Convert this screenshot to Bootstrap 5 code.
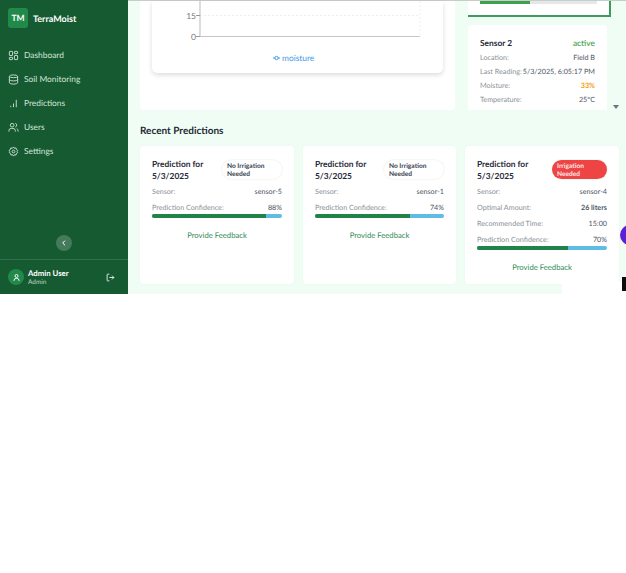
<!DOCTYPE html>
<html lang="en">
<head>
<meta charset="utf-8">
<title>TerraMoist</title>
<link href="https://cdn.jsdelivr.net/npm/bootstrap@5.3.0/dist/css/bootstrap.min.css" rel="stylesheet">
<style>
html,body{margin:0;background:#fff;}
body{font-family:"Lato","Open Sans",sans-serif;color:#1f2937;overflow:hidden;text-rendering:geometricPrecision;}
.app-shell{height:294px;width:626px;position:relative;overflow:hidden;}
.side-bar{width:128px;flex:0 0 128px;background:#165a32;color:#fff;}
.brand-row{height:37px;padding:8px 8px 0;}
.brand-tile{width:20px;height:20px;border-radius:3px;background:#218a4b;font-size:8.5px;font-weight:700;}
.brand-name{font-size:9px;font-weight:700;margin:1px 0 0 5px;line-height:20px;}
.nav-stack{padding-top:6px;}
.nav-entry{height:24px;padding-left:8px;font-size:8.4px;color:#cfe3d6;text-decoration:none;}
.nav-entry svg{width:11px;height:11px;margin-right:5px;flex:none;}
.collapse-zone{height:56px;}
.round-toggle{width:16px;height:16px;border-radius:50%;background:rgba(255,255,255,.2);}
.user-zone{height:35px;border-top:1px solid rgba(255,255,255,.13);padding:0 13px 0 8px;}
.user-disc{width:16px;height:16px;border-radius:50%;background:#218a4b;margin-right:4px;}
.user-title{font-size:7.8px;font-weight:700;line-height:10px;}
.user-role{font-size:6.5px;line-height:9px;color:#b9d4c3;}
.main-area{flex:1;background:#f0fdf4;padding:0 7px 0 12px;border-top:1px solid #c9cdca;min-width:0;}
.upper-row{height:109px;}
.chart-panel{width:315px;background:#fff;border-radius:0 0 4px 4px;padding:0 12px 37px;}
.chart-box{height:72px;background:#fff;border-radius:0 0 5px 5px;box-shadow:0 2px 5px rgba(0,0,0,.14);}
.chart-box svg{display:block;}
.sensor-col{width:141px;margin-left:13px;}
.cut-card{height:16px;margin-right:-2px;background:#fff;border-right:2px solid #3e9a5d;border-bottom:2px solid #3e9a5d;padding:0 12px;}
.meter-cut{height:3px;background:#e5e7eb;}
.meter-cut div{height:3px;background:#3ea150;}
.sensor-box{height:85px;margin-top:8px;background:#fff;border-radius:4px 4px 0 0;padding:12px 12px 0;margin-right:2px;}
.sensor-head{font-size:8.4px;line-height:12px;margin-bottom:2px;font-weight:700;}
.state-on{color:#43a047;}
.kv-row{font-size:7.2px;line-height:14px;white-space:nowrap;}
.kv-key{color:#8b9198;}
.kv-val{color:#4b5563;}
.val-warn{color:#f59e0b;font-weight:700;}
.scroll-tip{width:0;height:0;border-left:3px solid transparent;border-right:3px solid transparent;border-top:4px solid #6b7280;margin:104px 0 0 4px;flex:none;}
.section-title{font-size:10px;font-weight:700;line-height:14px;margin:14px 0 8px;color:#1f2937;}
.pred-grid{display:grid;grid-template-columns:154px 153px 154px;column-gap:9px;}
.pred-box{height:138px;background:#fff;border-radius:4px;padding:12px;box-shadow:0 0 2px rgba(0,0,0,.04);}
.pred-head{height:26px;margin-bottom:1px;flex:none;}
.pred-title{font-size:8.4px;font-weight:700;line-height:12px;width:68px;}
.status-pill{width:60px;height:19px;margin-top:2px;border-radius:10px;font-size:6.6px;line-height:8px;padding:2px 5px;font-weight:700;box-shadow:0 0 2px rgba(0,0,0,.12);}
.pill-calm{background:#fff;color:#374151;}
.pill-alert{background:#ef4444;color:#fde8e8;width:55px;}
.pred-row{font-size:7.2px;line-height:14px;margin-bottom:2px;flex:none;}
.conf-row{margin-bottom:0;line-height:13px;}
.conf-bar{height:4px;border-radius:2px;background:#5fbde4;overflow:hidden;flex:none;}
.conf-fill{height:4px;background:#218347;}
.feedback-link{font-size:7.7px;line-height:12px;color:#2f8a55;text-decoration:none;margin-top:11px;}
.float-dot{position:absolute;left:620px;top:225px;width:20px;height:20px;border-radius:50%;background:#5b21d6;}
.float-sheet{position:absolute;left:562px;top:282px;width:64px;height:12px;background:#fff;}
.float-black{position:absolute;left:622px;top:277px;width:4px;height:14px;background:#0c0c0c;}
</style>
</head>
<body>
<div class="app-shell d-flex">
  <aside class="side-bar d-flex flex-column">
    <div class="brand-row d-flex align-items-start">
      <div class="brand-tile d-flex align-items-center justify-content-center">TM</div>
      <div class="brand-name">TerraMoist</div>
    </div>
    <nav class="nav-stack d-flex flex-column">
      <a class="nav-entry d-flex align-items-center" href="#"><svg viewBox="0 0 24 24" fill="none" stroke="currentColor" stroke-width="2"><rect x="3" y="3" width="7" height="9" rx="1"/><rect x="14" y="3" width="7" height="5" rx="1"/><rect x="14" y="12" width="7" height="9" rx="1"/><rect x="3" y="16" width="7" height="5" rx="1"/></svg>Dashboard</a>
      <a class="nav-entry d-flex align-items-center" href="#"><svg viewBox="0 0 24 24" fill="none" stroke="currentColor" stroke-width="2"><ellipse cx="12" cy="5" rx="9" ry="3"/><path d="M3 5v14c0 1.700 4 3 9 3s9-1.300 9-3V5"/><path d="M3 12c0 1.700 4 3 9 3s9-1.300 9-3"/></svg>Soil Monitoring</a>
      <a class="nav-entry d-flex align-items-center" href="#"><svg viewBox="0 0 24 24" fill="none" stroke="currentColor" stroke-width="2"><path d="M6 20v-3M12 20v-8M18 20V4"/></svg>Predictions</a>
      <a class="nav-entry d-flex align-items-center" href="#"><svg viewBox="0 0 24 24" fill="none" stroke="currentColor" stroke-width="2"><circle cx="9" cy="7" r="4"/><path d="M2 21v-2a5 5 0 0 1 5-5h4a5 5 0 0 1 5 5v2M16 3.100a4 4 0 0 1 0 7.800M22 21v-2a5 5 0 0 0-3-4.600"/></svg>Users</a>
      <a class="nav-entry d-flex align-items-center" href="#"><svg viewBox="0 0 24 24" fill="none" stroke="currentColor" stroke-width="2"><circle cx="12" cy="12" r="3"/><path d="M12 2l2 3 3.500-.8.800 3.500 3 2-1.500 2.300 1.500 2.300-3 2-.8 3.500-3.500-.8-2 3-2-3-3.500.8-.8-3.500-3-2L3.700 12 2.200 9.700l3-2 .8-3.500L9.500 5z"/></svg>Settings</a>
    </nav>
    <div class="collapse-zone flex-grow-1 d-flex align-items-end justify-content-center pb-2">
      <div class="round-toggle d-flex align-items-center justify-content-center"><svg width="8" height="8" viewBox="0 0 24 24" fill="none" stroke="#fff" stroke-width="3"><path d="M15 5l-7 7 7 7"/></svg></div>
    </div>
    <div class="user-zone d-flex align-items-center">
      <div class="user-disc d-flex align-items-center justify-content-center"><svg width="9" height="9" viewBox="0 0 24 24" fill="none" stroke="#fff" stroke-width="2.500"><circle cx="12" cy="8" r="4"/><path d="M5 21a7 7 0 0 1 14 0"/></svg></div>
      <div class="flex-grow-1"><div class="user-title">Admin User</div><div class="user-role">Admin</div></div>
      <svg width="9" height="9" viewBox="0 0 24 24" fill="none" stroke="#fff" stroke-width="2.200"><path d="M9 21H5a2 2 0 0 1-2-2V5a2 2 0 0 1 2-2h4M16 17l5-5-5-5M21 12H9"/></svg>
    </div>
  </aside>
  <main class="main-area">
    <div class="upper-row d-flex">
      <section class="chart-panel flex-none">
        <div class="chart-box">
          <svg width="291" height="72" viewBox="0 0 291 72">
            <path d="M48 14.500H268M268 0V35" stroke="#eeeeee" stroke-width="1" stroke-dasharray="2 2" fill="none"/>
            <path d="M48 0V35.500H268" stroke="#c6c6c6" stroke-width="1.200" fill="none"/>
            <path d="M44 14.500H48M44 35.500H48" stroke="#999" stroke-width="1"/>
            <text x="44" y="18" text-anchor="end" font-size="8.500" fill="#777" font-family="Lato">15</text>
            <text x="44" y="39" text-anchor="end" font-size="8.500" fill="#777" font-family="Lato">0</text>
            <path d="M121 57h7" stroke="#3f9ce8" stroke-width="1"/><circle cx="124.500" cy="57" r="1.700" fill="#fff" stroke="#3f9ce8"/>
            <text x="130" y="60" font-size="8.400" fill="#3f9ce8" font-family="Lato">moisture</text>
          </svg>
        </div>
      </section>
      <section class="sensor-col">
        <div class="cut-card"><div class="meter-cut"><div style="width:43%"></div></div></div>
        <div class="sensor-box overflow-hidden">
          <div class="sensor-head d-flex justify-content-between"><span>Sensor 2</span><span class="state-on fw-medium">active</span></div>
          <div class="kv-row d-flex justify-content-between"><span class="kv-key">Location:</span><span class="kv-val">Field B</span></div>
          <div class="kv-row d-flex justify-content-between"><span class="kv-key">Last Reading:</span><span class="kv-val">5/3/2025, 6:05:17 PM</span></div>
          <div class="kv-row d-flex justify-content-between"><span class="kv-key">Moisture:</span><span class="val-warn">33%</span></div>
          <div class="kv-row d-flex justify-content-between"><span class="kv-key">Temperature:</span><span class="kv-val">25°C</span></div>
        </div>
      </section>
      <div class="scroll-tip"></div>
    </div>
    <h2 class="section-title">Recent Predictions</h2>
    <div class="pred-grid">
      <article class="pred-box d-flex flex-column">
        <div class="pred-head d-flex justify-content-between"><div class="pred-title">Prediction for 5/3/2025</div><div class="status-pill pill-calm">No Irrigation Needed</div></div>
        <div class="pred-row d-flex justify-content-between"><span class="kv-key">Sensor:</span><span class="kv-val">sensor-5</span></div>
        <div class="pred-row conf-row d-flex justify-content-between"><span class="kv-key">Prediction Confidence:</span><span class="kv-val">88%</span></div>
        <div class="conf-bar"><div class="conf-fill" style="width:88%"></div></div>
        <a class="feedback-link text-center" href="#">Provide Feedback</a>
      </article>
      <article class="pred-box d-flex flex-column">
        <div class="pred-head d-flex justify-content-between"><div class="pred-title">Prediction for 5/3/2025</div><div class="status-pill pill-calm">No Irrigation Needed</div></div>
        <div class="pred-row d-flex justify-content-between"><span class="kv-key">Sensor:</span><span class="kv-val">sensor-1</span></div>
        <div class="pred-row conf-row d-flex justify-content-between"><span class="kv-key">Prediction Confidence:</span><span class="kv-val">74%</span></div>
        <div class="conf-bar"><div class="conf-fill" style="width:74%"></div></div>
        <a class="feedback-link text-center" href="#">Provide Feedback</a>
      </article>
      <article class="pred-box d-flex flex-column">
        <div class="pred-head d-flex justify-content-between"><div class="pred-title">Prediction for 5/3/2025</div><div class="status-pill pill-alert">Irrigation Needed</div></div>
        <div class="pred-row d-flex justify-content-between"><span class="kv-key">Sensor:</span><span class="kv-val">sensor-4</span></div>
        <div class="pred-row d-flex justify-content-between"><span class="kv-key">Optimal Amount:</span><span class="kv-val fw-bold">26 liters</span></div>
        <div class="pred-row d-flex justify-content-between"><span class="kv-key">Recommended Time:</span><span class="kv-val">15:00</span></div>
        <div class="pred-row conf-row d-flex justify-content-between"><span class="kv-key">Prediction Confidence:</span><span class="kv-val">70%</span></div>
        <div class="conf-bar"><div class="conf-fill" style="width:70%"></div></div>
        <a class="feedback-link text-center" href="#">Provide Feedback</a>
      </article>
    </div>
  </main>
  <div class="float-dot"></div>
  <div class="float-sheet"></div>
  <div class="float-black"></div>
</div>
<script src="https://cdn.jsdelivr.net/npm/bootstrap@5.3.0/dist/js/bootstrap.bundle.min.js"></script>
</body>
</html>
